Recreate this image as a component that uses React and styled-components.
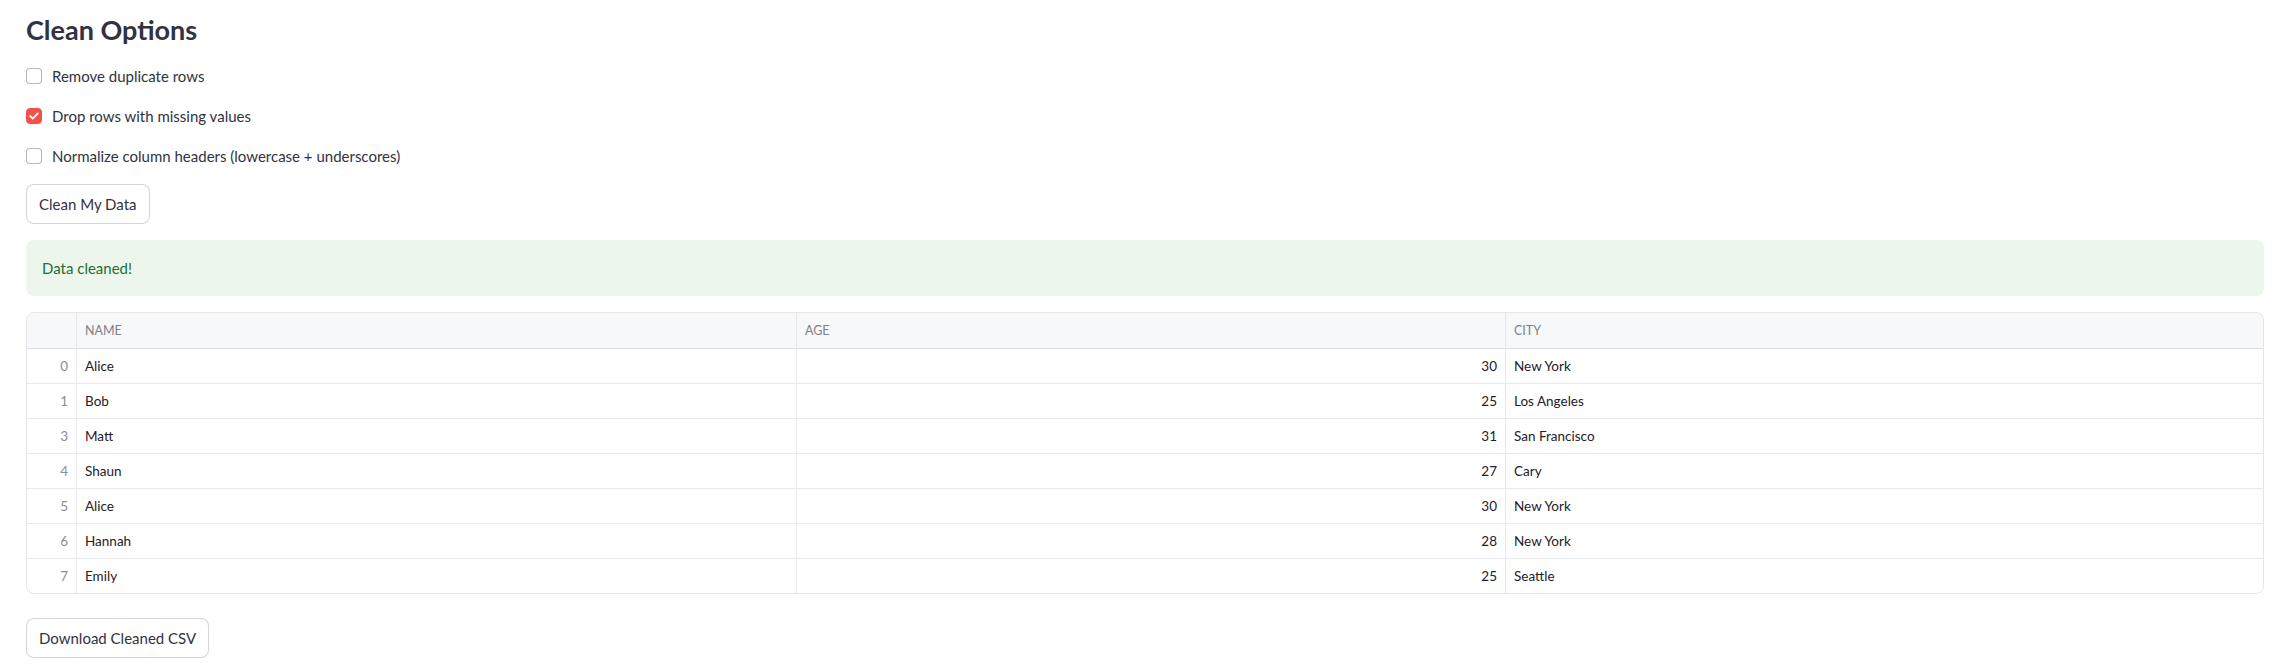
import React from 'react'
import styled, { createGlobalStyle } from 'styled-components'

const GlobalStyle = createGlobalStyle`
  body {
    margin: 0;
    background: #ffffff;
    font-family: Lato, "Liberation Sans", sans-serif;
    color: #31333f;
  }
`

const options = [
  { label: 'Remove duplicate rows', checked: false },
  { label: 'Drop rows with missing values', checked: true },
  { label: 'Normalize column headers (lowercase + underscores)', checked: false },
]

const rows = [
  { idx: 0, name: 'Alice', age: 30, city: 'New York' },
  { idx: 1, name: 'Bob', age: 25, city: 'Los Angeles' },
  { idx: 3, name: 'Matt', age: 31, city: 'San Francisco' },
  { idx: 4, name: 'Shaun', age: 27, city: 'Cary' },
  { idx: 5, name: 'Alice', age: 30, city: 'New York' },
  { idx: 6, name: 'Hannah', age: 28, city: 'New York' },
  { idx: 7, name: 'Emily', age: 25, city: 'Seattle' },
]

const App = () => {
  return (
    <Main>
      <GlobalStyle />
      <Title>Clean Options</Title>
      <CheckList>
        {options.map((o) => (
          <CheckRow key={o.label}>
            <Box checked={o.checked}>
              {o.checked && (
                <svg width="10" height="8" viewBox="0 0 10 8">
                  <path d="M1.2 4.1 L3.8 6.6 L8.8 1.4" fill="none" stroke="#fff" strokeWidth="1.9" strokeLinecap="round" strokeLinejoin="round" />
                </svg>
              )}
            </Box>
            <CheckLabel>{o.label}</CheckLabel>
          </CheckRow>
        ))}
      </CheckList>
      <Button>Clean My Data</Button>
      <Alert>Data cleaned!</Alert>
      <Table>
        <HeaderRow>
          <HeadCell />
          <HeadCell>NAME</HeadCell>
          <HeadCell>AGE</HeadCell>
          <HeadCell last>CITY</HeadCell>
        </HeaderRow>
        {rows.map((r) => (
          <Row key={r.idx}>
            <Cell index>{r.idx}</Cell>
            <Cell>{r.name}</Cell>
            <Cell numeric>{r.age}</Cell>
            <Cell last>{r.city}</Cell>
          </Row>
        ))}
      </Table>
      <DownloadWrap>
        <Button>Download Cleaned CSV</Button>
      </DownloadWrap>
    </Main>
  )
}

export default App

const Main = styled.div`
  display: flex;
  flex-direction: column;
  align-items: flex-start;
  gap: 16px;
  padding: 10px 13px 0 26px;
`
const Title = styled.h3`
  margin: 2px 0 0;
  font-size: 27px;
  font-weight: 700;
  line-height: 36px;
  color: #31333f;
`
const CheckList = styled.div`
  display: flex;
  flex-direction: column;
  gap: 16px;
`
const CheckRow = styled.label`
  display: flex;
  align-items: center;
  gap: 10px;
  height: 24px;
`
const Box = styled.span`
  width: 16px;
  height: 16px;
  box-sizing: border-box;
  border-radius: 4px;
  display: flex;
  align-items: center;
  justify-content: center;
  border: 1px solid ${(p) => (p.checked ? '#ee5248' : 'rgba(49, 51, 63, 0.35)')};
  background: ${(p) => (p.checked ? '#ee5248' : '#ffffff')};
`
const CheckLabel = styled.span`
  font-size: 15px;
  color: #31333f;
`
const Button = styled.button`
  height: 40px;
  padding: 0 12px;
  background: #ffffff;
  border: 1px solid rgba(49, 51, 63, 0.2);
  border-radius: 8px;
  font-family: Lato, "Liberation Sans", sans-serif;
  font-size: 15px;
  color: #31333f;
`
const Alert = styled.div`
  align-self: stretch;
  height: 56px;
  box-sizing: border-box;
  display: flex;
  align-items: center;
  padding: 0 16px;
  border-radius: 8px;
  background: #ecf6ec;
  color: #1e6e33;
  font-size: 15px;
`
const Table = styled.div`
  align-self: stretch;
  border: 1px solid #e4e5e9;
  border-radius: 8px;
  overflow: hidden;
`
const HeaderRow = styled.div`
  display: grid;
  grid-template-columns: 50px 720px 709px 1fr;
  height: 36px;
  box-sizing: border-box;
  background: #f7f8fa;
  border-bottom: 1px solid #dedfe4;
`
const HeadCell = styled.div`
  display: flex;
  align-items: center;
  padding: 0 8px;
  font-size: 12.5px;
  color: #7e8089;
  border-right: ${(p) => (p.last ? 'none' : '1px solid #e6e7eb')};
`
const Row = styled.div`
  display: grid;
  grid-template-columns: 50px 720px 709px 1fr;
  height: 35px;
  box-sizing: border-box;
  border-bottom: 1px solid #e8e9ec;
  &:last-child {
    border-bottom: none;
    height: 34px;
  }
`
const Cell = styled.div`
  display: flex;
  align-items: center;
  justify-content: ${(p) => (p.index || p.numeric ? 'flex-end' : 'flex-start')};
  padding: 0 8px;
  font-size: 13.5px;
  color: ${(p) => (p.index ? '#8b8d96' : '#1f2028')};
  border-right: ${(p) => (p.last ? 'none' : '1px solid #e8e9ec')};
`
const DownloadWrap = styled.div`
  padding-top: 8px;
`
